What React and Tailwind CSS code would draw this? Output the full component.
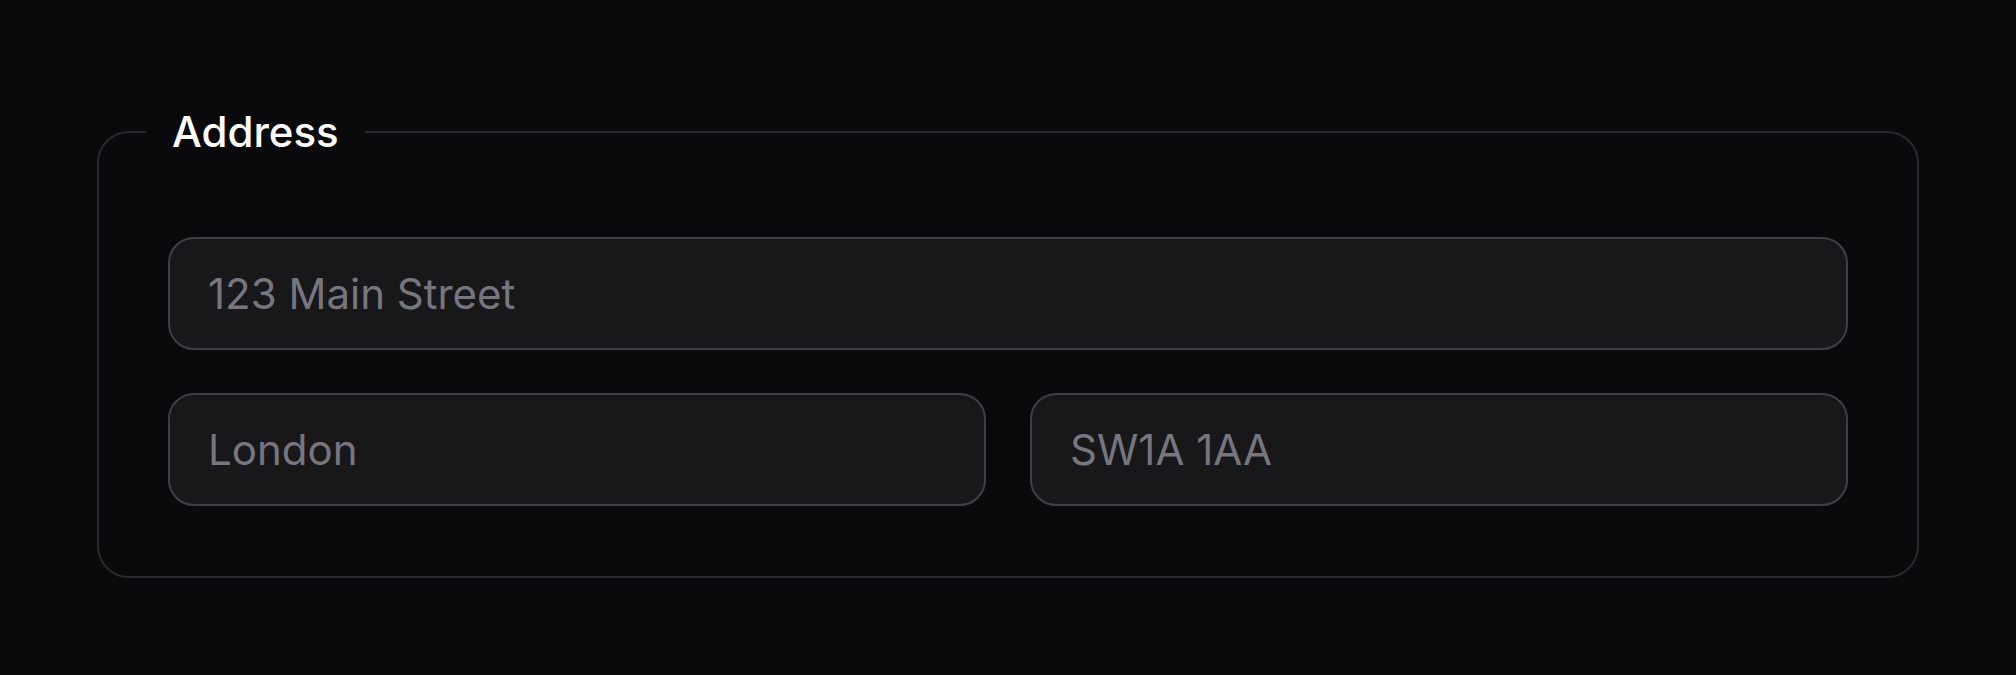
const Field = ({ placeholder, className = '' }) => (
    <input
        type="text"
        placeholder={placeholder}
        className={`h-[113px] w-full rounded-[26px] border-2 border-[#3f3f46] bg-[#18181b] px-[38px] text-[42px] text-[#f4f4f5] placeholder:text-[#77767f] outline-none ${className}`}
    />
);

export default function App() {
    return (
        <div
            className="min-h-screen w-full bg-[#0a0a0c] px-[97px] pt-[112px]"
            style={{ fontFamily: 'Inter, "Noto Sans", sans-serif' }}
        >
            <fieldset className="rounded-[32px] border-2 border-[#2a2a2e] px-[69px] pt-[85px] pb-[70px]">
                {/* Legend sits on the top border */}
                <legend className="-ml-[22px] px-[26px] text-[42px] leading-[40px] font-medium text-white">
                    Address
                </legend>
                <div className="flex flex-col gap-[43px]">
                    <Field placeholder="123 Main Street" />
                    <div className="grid grid-cols-2 gap-[44px]">
                        <Field placeholder="London" />
                        <Field placeholder="SW1A 1AA" />
                    </div>
                </div>
            </fieldset>
        </div>
    );
}
